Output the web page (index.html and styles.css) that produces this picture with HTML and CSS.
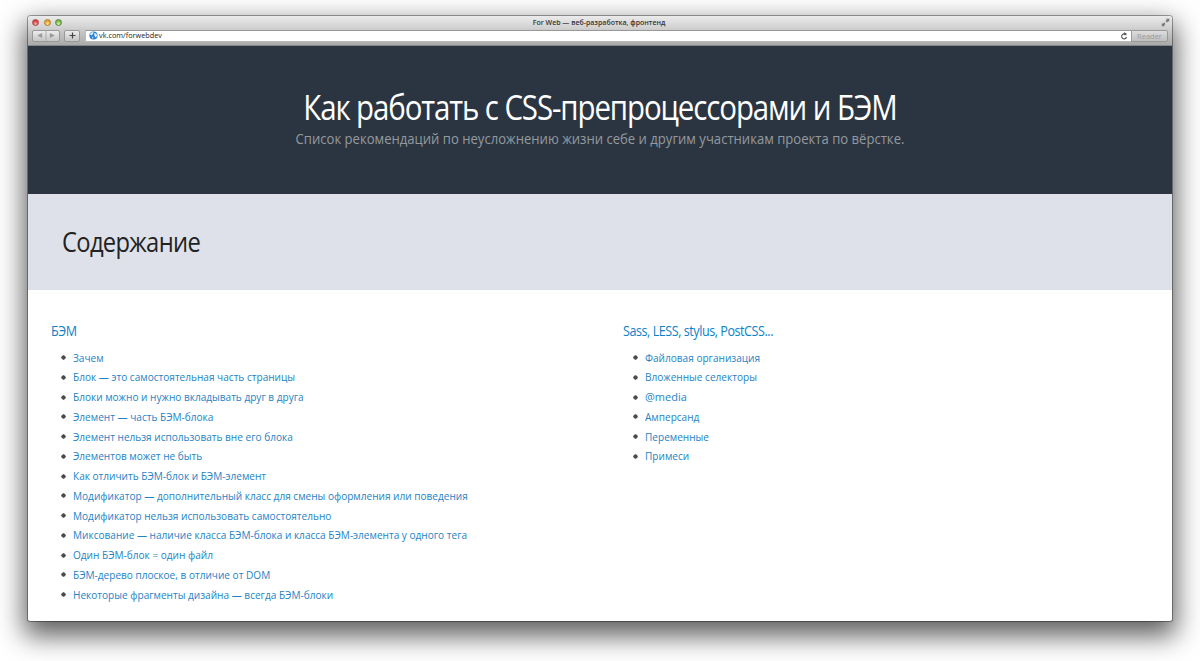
FILE: index.html
```html
<!DOCTYPE html>
<html lang="ru">
<head>
<meta charset="utf-8">
<title>For Web — веб-разработка, фронтенд</title>
<link rel="stylesheet" href="styles.css">
</head>
<body>
<div class="window">
  <header class="chrome">
    <div class="titlebar">
      <div class="lights"><i class="light red"></i><i class="light yellow"></i><i class="light green"></i></div>
      <div class="title">For Web — веб-разработка, фронтенд</div>
      <svg class="expand" width="9" height="9" viewBox="0 0 9 9"><path d="M4.500 .5h4v4L7.300 3.300 5.900 4.700 4.300 3.100l1.400-1.400zM.5 8.500v-4l1.200 1.200L3.100 4.300 4.700 5.900 3.300 7.300 4.500 8.500z" fill="#737373" stroke="#e0e0e0" stroke-width=".5"/></svg>
    </div>
    <div class="toolbar">
      <div class="button nav">
        <svg width="27" height="11" viewBox="0 0 27 11"><path d="M9.500 3v5L4.500 5.500zM17.500 3v5l5-2.500z" fill="#999"/><path d="M13.500 0v11" stroke="#aaa"/></svg>
      </div>
      <div class="button add">
        <svg width="7" height="7" viewBox="0 0 7 7"><path d="M3.500 .5v6M.5 3.500h6" stroke="#444" stroke-width="1.200"/></svg>
      </div>
      <div class="address">
        <svg width="9" height="9" viewBox="0 0 9 9"><circle cx="4.500" cy="4.500" r="4.100" fill="#2b80d5"/><path d="M1 3.500C1.500 1.500 3.500 .8 4.500 1.200L4 3 2.500 4.600zM5.200 2l2 .4 1 2.300-1.700 1.800-1.200-2zM2.600 5.500l1.800.7-.5 1.700z" fill="#d7efff"/></svg>
        <span class="url">vk.com/forwebdev</span>
        <svg class="reload" width="8" height="8" viewBox="0 0 8 8"><path d="M6.300 3.200A2.500 2.500 0 1 0 6.500 5" fill="none" stroke="#555" stroke-width="1.100"/><path d="M4 .2l2.700 1.400L4.400 3.500z" fill="#555"/></svg>
      </div>
      <div class="reader">Reader</div>
    </div>
  </header>
  <section class="hero">
    <h1>Как работать с CSS-препроцессорами и БЭМ</h1>
    <p>Список рекомендаций по неусложнению жизни себе и другим участникам проекта по вёрстке.</p>
  </section>
  <section class="contents"><h2>Содержание</h2></section>
  <main class="columns">
    <section class="column">
      <h3>БЭМ</h3>
      <ul>
        <li><a>Зачем</a></li>
        <li><a>Блок — это самостоятельная часть страницы</a></li>
        <li><a>Блоки можно и нужно вкладывать друг в друга</a></li>
        <li><a>Элемент — часть БЭМ-блока</a></li>
        <li><a>Элемент нельзя использовать вне его блока</a></li>
        <li><a>Элементов может не быть</a></li>
        <li><a>Как отличить БЭМ-блок и БЭМ-элемент</a></li>
        <li><a>Модификатор — дополнительный класс для смены оформления или поведения</a></li>
        <li><a>Модификатор нельзя использовать самостоятельно</a></li>
        <li><a>Миксование — наличие класса БЭМ-блока и класса БЭМ-элемента у одного тега</a></li>
        <li><a>Один БЭМ-блок = один файл</a></li>
        <li><a>БЭМ-дерево плоское, в отличие от DOM</a></li>
        <li><a>Некоторые фрагменты дизайна — всегда БЭМ-блоки</a></li>
      </ul>
    </section>
    <section class="column">
      <h3>Sass, LESS, stylus, PostCSS...</h3>
      <ul>
        <li><a>Файловая организация</a></li>
        <li><a>Вложенные селекторы</a></li>
        <li><a class="wide">@media</a></li>
        <li><a>Амперсанд</a></li>
        <li><a>Переменные</a></li>
        <li><a>Примеси</a></li>
      </ul>
    </section>
  </main>
</div>
</body>
</html>
```
FILE: styles.css
```css
* { box-sizing: border-box; }
body { margin: 0; height: 661px; padding: 16px 28px 0; background: #fff; overflow: hidden; font-family: "Open Sans", "Noto Sans", sans-serif; }
.window { height: 605px; border-radius: 3px 3px 2px 2px; background: #fff; overflow: hidden; box-shadow: 0 0 0 1px rgba(0,0,0,.35), 0 11px 27px 4px rgba(0,0,0,.63); }
.chrome { height: 30px; background: linear-gradient(#ebebeb, #d0d0d0 43%, #cdcdcd 44%, #aaa); border-bottom: 1px solid #858585; }
.titlebar { height: 12px; display: grid; grid-template-columns: 1fr auto 1fr; align-items: center; padding: 0 2px 0 4px; }
.lights { display: flex; gap: 4.500px; }
.light { width: 7px; height: 7px; border-radius: 50%; border: 1px solid #833; }
.red { background: radial-gradient(circle at 50% 80%, #ffb5b5, #dc4545 60%); border-color: #ad4040; }
.yellow { background: radial-gradient(circle at 50% 80%, #ffec9a, #e5a235 60%); border-color: #b07923; }
.green { background: radial-gradient(circle at 50% 80%, #d6ffad, #79b851 60%); border-color: #54853a; }
.title { position: relative; left: -2px; font-size: 7px; line-height: 11px; padding-top: 1px; font-weight: 600; color: #333; }
.expand { justify-self: end; }
.toolbar { height: 17px; display: flex; align-items: center; padding: 0 4px 2px; }
.button { height: 12px; border: 1px solid #999; border-radius: 2px; background: linear-gradient(#ececec, #c4c4c4); display: flex; align-items: center; justify-content: center; }
.nav { width: 28px; }
.add { width: 16px; margin: 0 5px 0 4px; }
.address { flex: 1; height: 12px; display: flex; align-items: center; padding: 0 3px 0 3px; background: #fff; border: 1px solid #bbb; border-top-color: #999; border-right: 0; }
.url { font-size: 7.300px; line-height: 9px; margin-left: 1px; color: #222; flex: 1; }
.reader { width: 37px; height: 12px; border: 1px solid #999; border-radius: 0 2px 2px 0; background: linear-gradient(#ddd, #bfbfbf); color: #9d9d9d; font-size: 7.500px; line-height: 10px; text-align: center; }
.hero { height: 148px; background: #2b3541; text-align: center; padding-top: 38px; white-space: nowrap; }
.hero h1 { margin: 0; font-size: 34.500px; font-weight: 400; line-height: 46px; color: #fff; letter-spacing: -1.300px; transform: scaleX(.854); }
.hero p { margin: 0; font-size: 14px; line-height: 18px; color: #959a9f; transform: scaleX(.935); }
.contents { height: 96px; background: #dee1e9; padding: 29px 34px; }
.contents h2 { margin: 0; font-size: 28px; line-height: 37px; font-weight: 400; letter-spacing: -.8px; color: #222; transform: scaleX(.848); transform-origin: 0 50%; }
.columns { display: grid; grid-template-columns: 1fr 1fr; padding-top: 32px; }
.column { padding-left: 23px; }
.column h3 { margin: 0 0 7.500px; font-size: 14px; line-height: 18px; font-weight: 400; letter-spacing: -.5px; color: #0b83c7; transform: scaleX(.897); transform-origin: 0 50%; }
ul { margin: 0; padding: 0 0 0 22px; list-style: none; }
li { position: relative; height: 19.750px; line-height: 19.750px; font-size: 11px; color: #2583c4; white-space: nowrap; }
li a { display: inline-block; transform: scaleX(.915); transform-origin: 0 50%; }
li a.wide { transform: none; }
li::before { content: ""; position: absolute; left: -12px; top: 7.500px; width: 5px; height: 5px; border-radius: 50%; background: radial-gradient(circle, #4d4d4d 1.900px, transparent 2.500px); }
```
